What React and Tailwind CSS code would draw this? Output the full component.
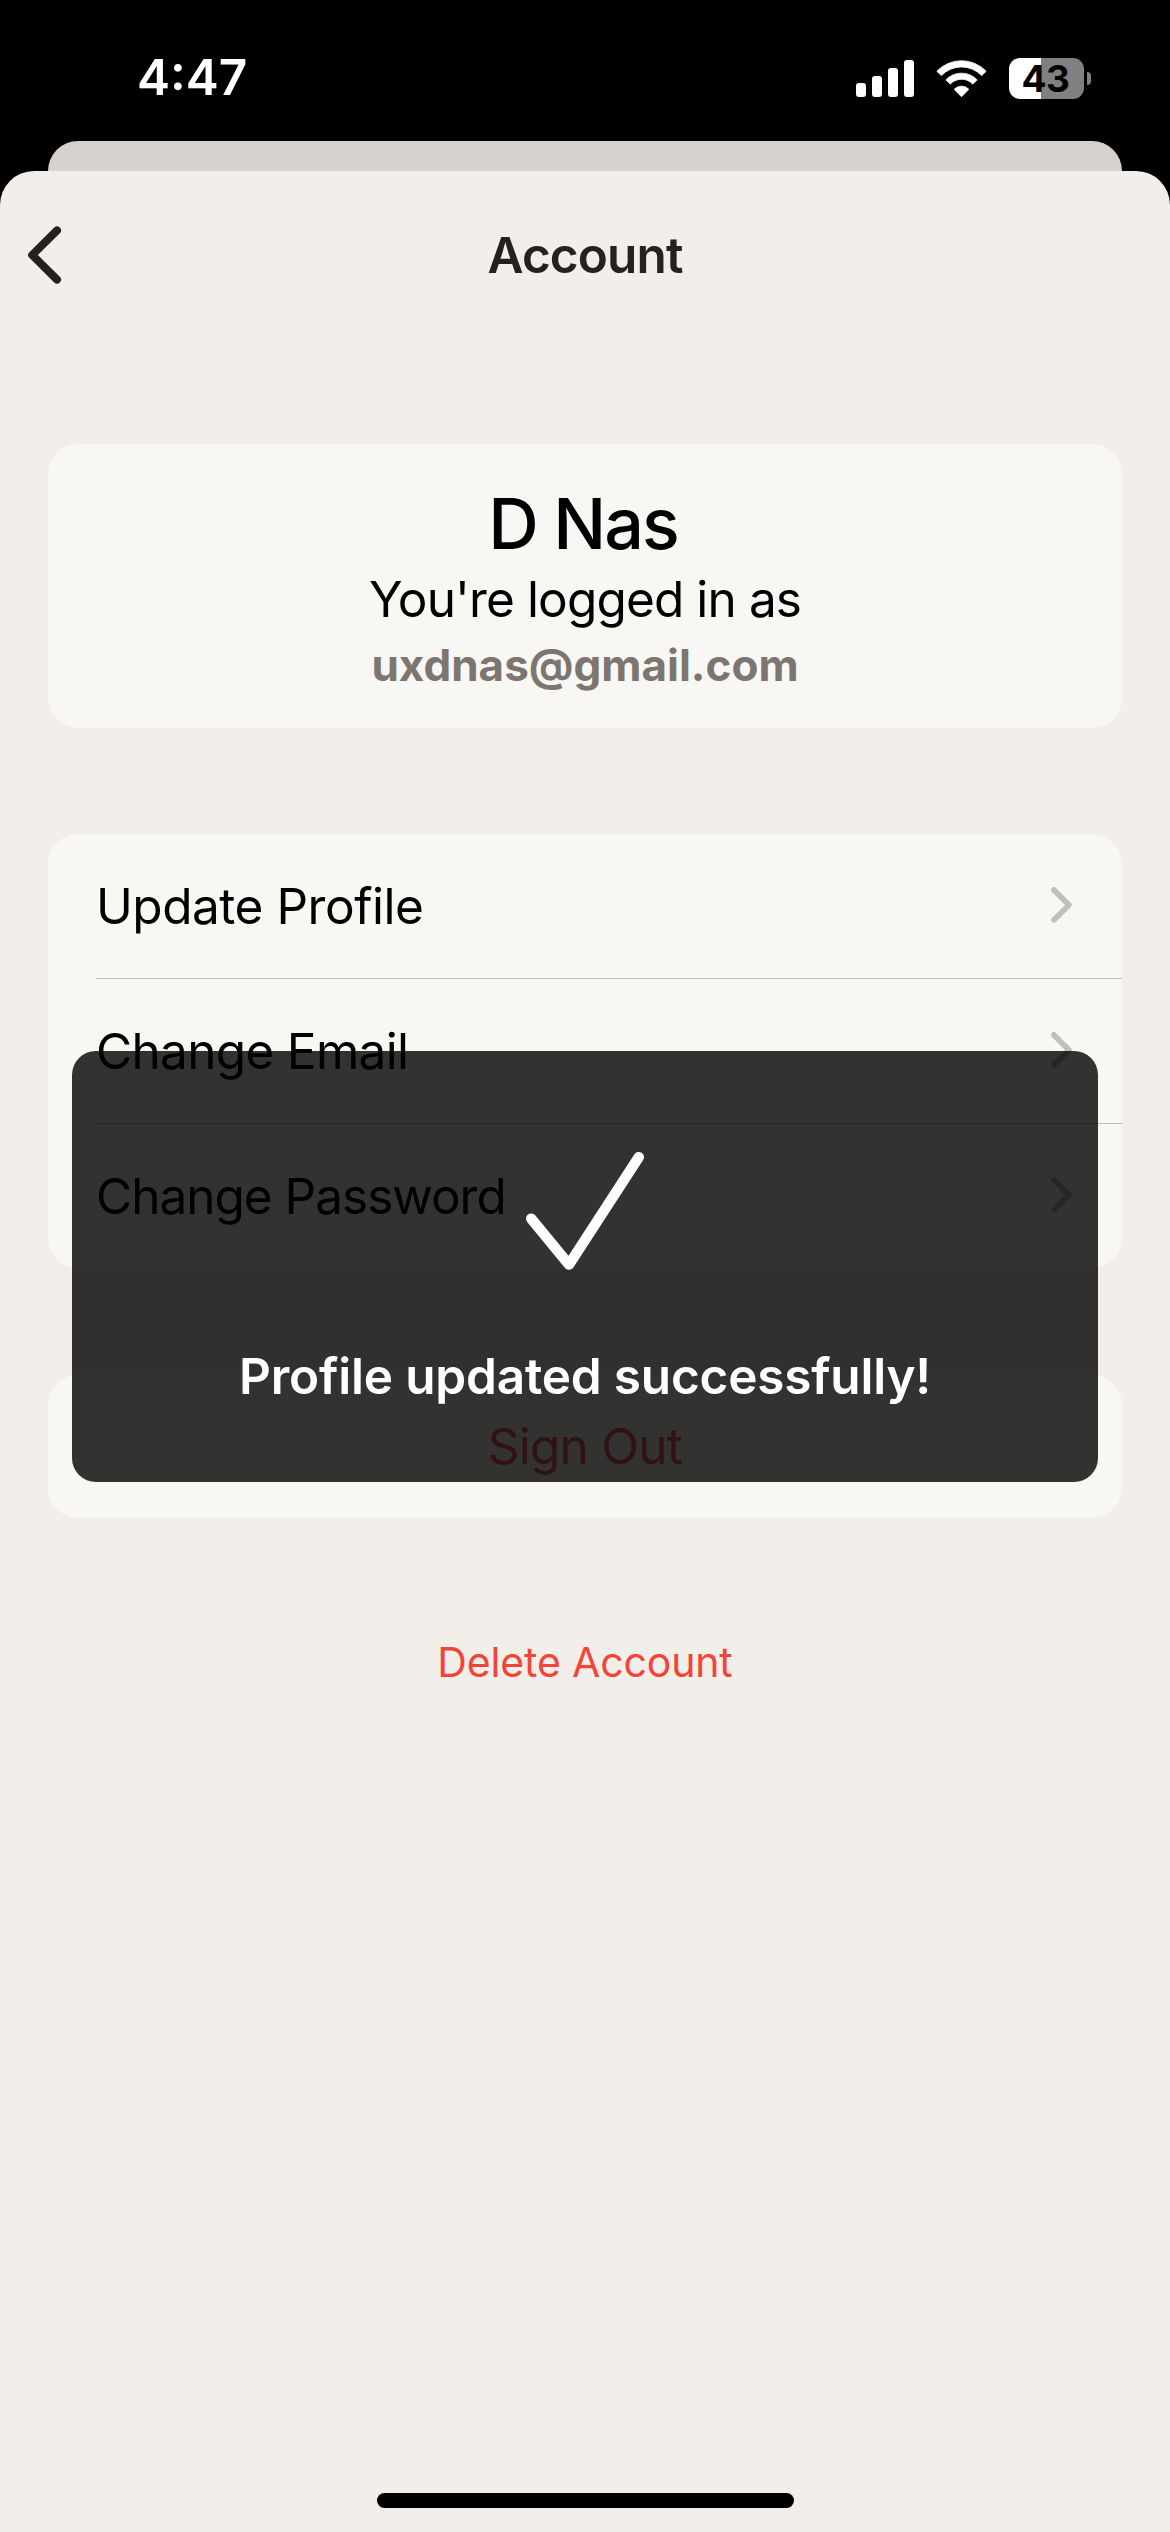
import React from "react";

const menuItems = [
  { label: "Update Profile", spacing: "tracking-[-0.47px]" },
  { label: "Change Email", spacing: "tracking-[-0.68px]" },
  { label: "Change Password", spacing: "tracking-[-1px]" },
];

const SignalIcon = () => (
  <div className="flex items-end gap-[6px] h-[37px]">
    <span className="w-[10px] h-[14px] rounded-[3px] bg-white" />
    <span className="w-[10px] h-[21px] rounded-[3px] bg-white" />
    <span className="w-[10px] h-[29px] rounded-[3px] bg-white" />
    <span className="w-[10px] h-[37px] rounded-[3px] bg-white" />
  </div>
);

const WifiIcon = () => (
  <svg width="51" height="37" viewBox="0 0 51 37" fill="white" stroke="white" strokeWidth="0.8" strokeLinejoin="round">
    <g transform="translate(25.5 34.7)">
      <path d="M-24.7 -23.4A34.1 34.1 0 0 1 24.7 -23.4L20.1 -19.1A27.7 27.7 0 0 0 -20.1 -19.1Z" />
      <path d="M-15.7 -14.8A21.6 21.6 0 0 1 15.7 -14.8L11.2 -10.6A15.4 15.4 0 0 0 -11.2 -10.6Z" />
      <path d="M-7.3 -5.4A10 10 0 0 1 7.3 -5.4L0.6 1.5Q0 2 -0.6 1.5Z" />
    </g>
  </svg>
);

const BatteryIcon = () => (
  <div className="flex items-center gap-[3px]">
    <div className="w-[75px] h-[41px] rounded-[11px] flex items-center justify-center pr-[2px] bg-linear-to-r from-white from-[32px] to-[#808080] to-[32px]">
      <span className="text-[37px] leading-none font-bold tracking-[-0.5px] text-black">43</span>
    </div>
    <span className="w-[4px] h-[13px] rounded-r-full bg-[#808080]" />
  </div>
);

const StatusBar = () => (
  <div className="h-[141px] shrink-0 pt-[15px] pl-[137px] pr-[79px] flex items-center justify-between text-white">
    <span className="text-[49.5px] leading-none font-semibold">4:47</span>
    <div className="flex items-center gap-[22px]">
      <SignalIcon />
      <WifiIcon />
      <BatteryIcon />
    </div>
  </div>
);

const ChevronRight = () => (
  <svg width="21" height="36" viewBox="0 0 21 36" fill="none" stroke="#c0bfbc" strokeWidth="5.6" strokeLinecap="round" strokeLinejoin="round">
    <path d="M2.9 2.9L18 17.9L2.9 32.9" />
  </svg>
);

const Toast = () => (
  <div className="absolute left-[72px] right-[72px] top-[1051px] h-[431px] rounded-[24px] bg-black/80 flex flex-col items-center pt-[101px]">
    <svg className="shrink-0" width="118" height="118" viewBox="0 0 118 118" fill="none" stroke="white" strokeWidth="10.4" strokeLinecap="round" strokeLinejoin="round">
      <path d="M5.2 66.6L43 112.6L112.8 5.2" />
    </svg>
    <p className="mt-[76px] text-[49.5px] leading-[60px] font-semibold tracking-[-0.19px] text-white">
      Profile updated successfully!
    </p>
  </div>
);

const App = () => {
  return (
    <div className="relative w-[1170px] h-[2532px] bg-black flex flex-col overflow-hidden font-['Inter',sans-serif]">
      <StatusBar />

      {/* Edge of the sheet underneath */}
      <div className="h-[30px] shrink-0 mx-[48px] rounded-t-[30px] bg-[#d5d1cd]" />

      <div className="flex-1 flex flex-col rounded-t-[34px] bg-[#f2efea]">
        {/* Header */}
        <header className="h-[168px] px-[28px] grid grid-cols-[1fr_auto_1fr] items-center">
          <button>
            <svg width="34" height="58" viewBox="0 0 34 58" fill="none" stroke="#24221f" strokeWidth="8" strokeLinecap="round" strokeLinejoin="round">
              <path d="M29 4.4L4.2 29L29 53.6" />
            </svg>
          </button>
          <h1 className="text-[49.5px] leading-[60px] font-semibold tracking-[-0.88px] text-[#24221f]">Account</h1>
        </header>

        {/* Profile card */}
        <section className="mx-[48px] mt-[105px] h-[284px] pt-[36px] rounded-[30px] bg-[#f8f7f3] text-center text-black">
          <h2 className="pr-[4px] text-[70px] leading-[87px] font-medium tracking-[-1.97px]">D Nas</h2>
          <p className="text-[49.5px] leading-[64px] tracking-[-0.87px]">You're logged in as</p>
          <p className="text-[44px] leading-[68px] font-bold text-[#7d756f]">uxdnas@gmail.com</p>
        </section>

        {/* Menu */}
        <ul className="mx-[48px] mt-[106px] pl-[48px] rounded-[30px] bg-[#f8f7f3] divide-y divide-[#c0bfbb]">
          {menuItems.map((item) => (
            <li key={item.label} className="box-content h-[144px] flex items-center justify-between">
              <span className={`text-[49.5px] leading-[60px] text-black ${item.spacing}`}>{item.label}</span>
              <span className="pr-[50px] pb-[2px]">
                <ChevronRight />
              </span>
            </li>
          ))}
        </ul>

        <button className="mx-[48px] mt-[107px] h-[143px] rounded-[30px] bg-[#f8f7f3] text-[49.5px] tracking-[-0.79px] text-[#f0566c]">
          Sign Out
        </button>

        <button className="mt-[114px] self-center text-[41px] leading-[60px] tracking-[-0.15px] text-[#f24538]">
          Delete Account
        </button>

        {/* Home indicator */}
        <div className="mt-auto mb-[24px] self-center w-[417px] h-[15px] rounded-full bg-black" />
      </div>

      <Toast />
    </div>
  );
};

export default App;
